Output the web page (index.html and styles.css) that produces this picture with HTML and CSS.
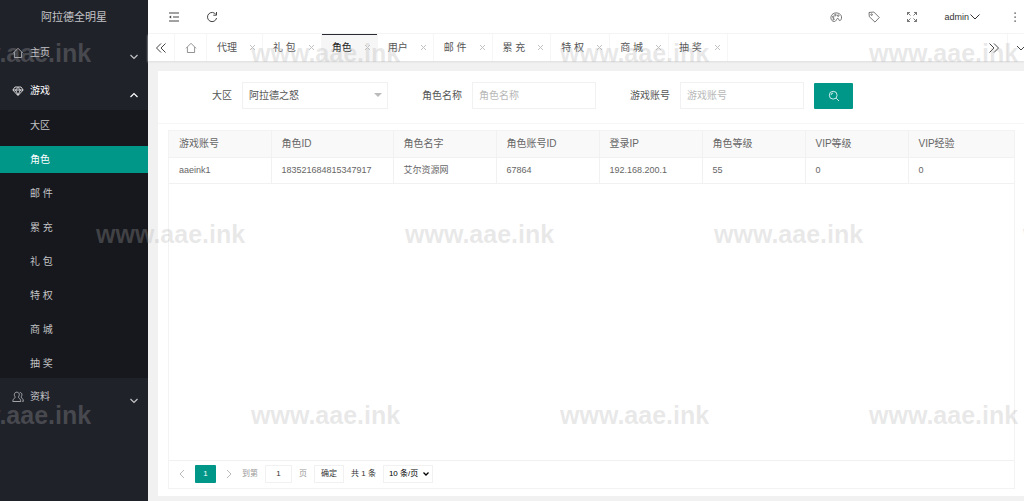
FILE: index.html
```html
<!DOCTYPE html>
<html lang="zh-CN">
<head>
<meta charset="utf-8">
<title>阿拉德全明星</title>
<link rel="stylesheet" href="styles.css">
</head>
<body>
<div class="app">
  <aside class="sidebar">
    <h1 class="brand">阿拉德全明星</h1>
    <nav class="menu">
      <a class="menu-item" href="#">
        <svg class="icon" viewBox="0 0 12 12"><path d="M1 6.3 6 1.3l5 5M2.4 5.2v5.3h7.2V5.2"/></svg>
        <span>主页</span>
        <svg class="arrow" viewBox="0 0 10 6"><path d="M1.5 1 5 4.5 8.5 1"/></svg>
      </a>
      <a class="menu-item open" href="#">
        <svg class="icon" viewBox="0 0 12 12"><path d="M3 2h6l2.2 3L6 10.6.8 5zM1 5h10M3.6 5 6 10l2.4-5M3.6 5 6 2.4 8.4 5"/></svg>
        <span>游戏</span>
        <svg class="arrow" viewBox="0 0 10 6"><path d="M1.5 5 5 1.5 8.5 5"/></svg>
      </a>
      <div class="submenu">
        <a class="sub-item" href="#">大区</a>
        <a class="sub-item active" href="#">角色</a>
        <a class="sub-item" href="#">邮 件</a>
        <a class="sub-item" href="#">累 充</a>
        <a class="sub-item" href="#">礼 包</a>
        <a class="sub-item" href="#">特 权</a>
        <a class="sub-item" href="#">商 城</a>
        <a class="sub-item" href="#">抽 奖</a>
      </div>
      <a class="menu-item" href="#">
        <svg class="icon" viewBox="0 0 12 12"><path d="M4.8 1.2c2.6 0 3.2 3 1.5 4.8C6 7 8.600 7 8.800 10.500H.8C1 7 3.600 7 3.300 6 1.600 4.200 2.200 1.200 4.800 1.200M7.800 1.400c2.400.2 2.700 3 1.200 4.600 0 1 2.300 1 2.400 4.300h-1.200"/></svg>
        <span>资料</span>
        <svg class="arrow" viewBox="0 0 10 6"><path d="M1.500 1 5 4.500 8.500 1"/></svg>
      </a>
    </nav>
  </aside>

  <main class="main">
    <header class="topbar">
      <button class="tool" aria-label="菜单"><svg class="icon dark" viewBox="0 0 12 12"><path d="M1 2h10M5 6h6M1 10h10"/><path class="solid" d="M1 6l2.200-1.500v3z"/></svg></button>
      <button class="tool" aria-label="刷新"><svg class="icon dark" viewBox="0 0 12 12"><path d="M10 3.600A4.600 4.600 0 1 0 10.600 7M10.500 1v3.200H7.300"/></svg></button>
      <span class="space"></span>
      <button class="tool" aria-label="主题"><svg class="icon" viewBox="0 0 12 12"><path d="M3 10.300C.2 9 .2 4.600 3 2.800c3-2 8-.6 8.500 3 .2 2-.5 3.700-1.700 3.800-1.400 0-.6-2-1.900-2.200-1.300 0-1 1-1.800 2-.8 1.100-2 1.400-3.100.9z"/><circle cx="3.200" cy="5.800" r=".8"/><circle cx="5.400" cy="4" r=".8"/><circle cx="8.200" cy="4.600" r=".8"/><circle cx="3.600" cy="8.200" r=".7"/></svg></button>
      <button class="tool" aria-label="便签"><svg class="icon" viewBox="0 0 12 12"><path d="M1 1.500 5.800 1l5.500 5.500-4.300 4.600L1.300 5.700z"/><circle cx="3.600" cy="3.600" r=".8"/></svg></button>
      <button class="tool" aria-label="全屏"><svg class="icon" viewBox="0 0 12 12"><path d="M1.500 4V1.500H4M1.500 1.500l3 3M8 1.500h2.500V4M10.500 1.500l-3 3M1.500 8v2.500H4M1.500 10.500l3-3M8 10.500h2.500V8M10.500 10.500l-3-3"/></svg></button>
      <button class="user">admin<svg class="user-arrow" viewBox="0 0 12 8"><path d="M1.500 1.500 6 6l4.500-4.500"/></svg></button>
      <button class="more" aria-label="更多"><svg class="icon" viewBox="0 0 12 12"><path class="solid" d="M5.500 1.500h1.200v1.200H5.500zM5.500 5.500h1.200v1.200H5.500zM5.500 9.500h1.200v1.200H5.500z"/></svg></button>
    </header>

    <nav class="tabs">
      <button class="tab-btn" aria-label="向左"><svg class="icon dark" viewBox="0 0 12 12"><path d="M6 1.500 1.500 6 6 10.500M10.500 1.500 6 6l4.500 4.500"/></svg></button>
      <button class="tab-btn home" aria-label="主页"><svg class="icon" viewBox="0 0 12 12"><path d="M1 6.300 6 1.300l5 5M2.400 5.200v5.300h7.200V5.200"/></svg></button>
      <a class="tab" href="#">代理<svg class="close" viewBox="0 0 7 7"><path d="M1 1l5 5M6 1 1 6"/></svg></a>
      <a class="tab" href="#">礼 包<svg class="close" viewBox="0 0 7 7"><path d="M1 1l5 5M6 1 1 6"/></svg></a>
      <a class="tab current" href="#">角色<svg class="close" viewBox="0 0 7 7"><path d="M1 1l5 5M6 1 1 6"/></svg></a>
      <a class="tab" href="#">用户<svg class="close" viewBox="0 0 7 7"><path d="M1 1l5 5M6 1 1 6"/></svg></a>
      <a class="tab" href="#">邮 件<svg class="close" viewBox="0 0 7 7"><path d="M1 1l5 5M6 1 1 6"/></svg></a>
      <a class="tab" href="#">累 充<svg class="close" viewBox="0 0 7 7"><path d="M1 1l5 5M6 1 1 6"/></svg></a>
      <a class="tab" href="#">特 权<svg class="close" viewBox="0 0 7 7"><path d="M1 1l5 5M6 1 1 6"/></svg></a>
      <a class="tab" href="#">商 城<svg class="close" viewBox="0 0 7 7"><path d="M1 1l5 5M6 1 1 6"/></svg></a>
      <a class="tab" href="#">抽 奖<svg class="close" viewBox="0 0 7 7"><path d="M1 1l5 5M6 1 1 6"/></svg></a>
      <span class="space"></span>
      <button class="tab-btn" aria-label="向右"><svg class="icon dark" viewBox="0 0 12 12"><path d="M1.500 1.500 6 6l-4.500 4.500M6 1.500 10.500 6 6 10.500"/></svg></button>
      <button class="tab-btn last" aria-label="标签操作"><svg class="icon dark" viewBox="0 0 12 12"><path d="M2 4l4 4 4-4"/></svg></button>
    </nav>

    <section class="card">
      <form class="filters">
        <label class="label" for="zone">大区</label>
        <span class="select-wrap zone">
          <select class="field" id="zone"><option>阿拉德之怒</option></select>
          <svg class="caret" viewBox="0 0 8 4"><path d="M0 0h8L4 4z"/></svg>
        </span>
        <label class="label" for="role">角色名称</label>
        <input class="field text" id="role" type="text" placeholder="角色名称">
        <label class="label" for="account">游戏账号</label>
        <input class="field text" id="account" type="text" placeholder="游戏账号">
        <button class="search" type="button" aria-label="搜索"><svg class="icon" viewBox="0 0 12 12"><circle cx="5.200" cy="5.200" r="3.900"/><path d="M8.200 8.200l2.800 2.800M3 5.200A2.200 2.200 0 0 1 5.200 3"/></svg></button>
      </form>

      <div class="grid">
        <div class="grid-body">
          <table class="data">
            <colgroup><col class="col-first"><col class="col-wide"><col class="col"><col class="col"><col class="col"><col class="col"><col class="col"><col></colgroup>
            <thead><tr><th>游戏账号</th><th>角色ID</th><th>角色名字</th><th>角色账号ID</th><th>登录IP</th><th>角色等级</th><th>VIP等级</th><th>VIP经验</th></tr></thead>
            <tbody><tr><td>aaeink1</td><td>183521684815347917</td><td>艾尔资源网</td><td>67864</td><td>192.168.200.1</td><td>55</td><td>0</td><td>0</td></tr></tbody>
          </table>
        </div>
        <div class="pager">
          <button class="step" aria-label="上一页"><svg viewBox="0 0 6 10"><path d="M5 1 1 5l4 4"/></svg></button>
          <button class="page">1</button>
          <button class="step" aria-label="下一页"><svg viewBox="0 0 6 10"><path d="M1 1l4 4-4 4"/></svg></button>
          <label class="muted" for="goto">到第</label>
          <input class="goto" id="goto" type="text" value="1">
          <span class="muted">页</span>
          <button class="confirm">确定</button>
          <span class="total">共 1 条</span>
          <span class="select-wrap">
            <select class="size" aria-label="每页条数"><option>10 条/页</option></select>
            <svg class="size-arrow" viewBox="0 0 6 4"><path d="M.5.500 3 3 5.500.500"/></svg>
          </span>
        </div>
      </div>
    </section>
  </main>

  <div class="watermark" aria-hidden="true">
    <div class="mark-row"><span>www.aae.ink</span><span>www.aae.ink</span><span>www.aae.ink</span><span>www.aae.ink</span></div>
    <div class="mark-row shifted"><span>www.aae.ink</span><span>www.aae.ink</span><span>www.aae.ink</span><span>www.aae.ink</span></div>
    <div class="mark-row"><span>www.aae.ink</span><span>www.aae.ink</span><span>www.aae.ink</span><span>www.aae.ink</span></div>
  </div>
</div>
</body>
</html>
```

FILE: styles.css
```css
* { box-sizing: border-box; }

body {
  margin: 0;
  background: #f1f1f1;
  color: #555;
  font: 10px/14px "Liberation Sans", "Noto Sans CJK SC", sans-serif;
}

a { color: inherit; text-decoration: none; }

button, input, select {
  margin: 0;
  padding: 0;
  border: 0;
  border-radius: 0;
  background: none;
  color: inherit;
  font: inherit;
  appearance: none;
}

svg { display: block; fill: none; stroke: currentColor; }

.app {
  position: relative;
  display: flex;
  min-height: 100vh;
  overflow: hidden;
}

.icon { width: 12px; height: 12px; flex: none; stroke-width: 0.8; }
.icon.dark { color: #444; stroke-width: 1; }
.solid { fill: currentColor; stroke: none; }
.space { flex: 1; }

/* Sidebar */
.sidebar {
  flex: none;
  width: 148px;
  background: #20222a;
  color: #c3c4c6;
}

.brand {
  margin: 0;
  font-size: 11px;
  font-weight: 400;
  line-height: 34px;
  text-align: center;
}

.menu-item {
  display: flex;
  align-items: center;
  gap: 6px;
  height: 38px;
  padding: 0 9px 0 12px;
}

.menu-item.open { color: #fff; }

.arrow {
  width: 10px;
  height: 6px;
  margin: 8px 0 0 auto;
  stroke-width: 1.2;
}

.submenu {
  display: flex;
  flex-direction: column;
  gap: 7px;
  padding: 2px 0 1px;
  background: #17181d;
}

.sub-item { padding-left: 30px; line-height: 27px; }
.sub-item.active { background: #009688; color: #fff; }

/* Top bars */
.main {
  display: flex;
  flex: 1;
  flex-direction: column;
  min-width: 0;
}

.topbar {
  display: flex;
  height: 34px;
  padding-left: 7px;
  background: #fff;
  border-bottom: 1px solid #f6f6f6;
}

.tool {
  display: flex;
  align-items: center;
  justify-content: center;
  width: 38px;
}

.user {
  display: flex;
  align-items: center;
  padding: 0 25px 0 13px;
  color: #333;
  font-size: 9px;
}

.user-arrow { width: 12px; height: 8px; }

.more {
  display: flex;
  align-items: center;
  padding: 0 3px;
  color: #222;
}

.tabs {
  display: flex;
  height: 27px;
  background: #fff;
  box-shadow: 0 1px 2px #ddd;
}

.tab-btn {
  display: flex;
  flex: none;
  align-items: center;
  justify-content: center;
  width: 27px;
  border-right: 1px solid #f6f6f6;
}

.tab-btn.home { width: 32px; color: #777; }
.tab-btn.last { margin-right: -11px; }

.tab {
  display: flex;
  flex: none;
  align-items: center;
  gap: 12px;
  padding: 0 6px 0 10px;
  border-right: 1px solid #f6f6f6;
}

.tab.current {
  background: #f6f6f6;
  box-shadow: inset 0 1px #292b34;
  color: #222;
}

.close { width: 7px; height: 7px; color: #c2c2c2; }

/* Card */
.card {
  display: flex;
  flex: 1;
  flex-direction: column;
  margin: 10px 0 5px 10px;
  background: #fff;
}

.filters {
  display: flex;
  align-items: center;
  gap: 10px;
  padding: 11px 10px 14px;
  border-bottom: 1px solid #f6f6f6;
}

.label { width: 64px; text-align: right; }

.select-wrap { position: relative; display: flex; }
.zone { width: 146px; }

.field {
  width: 100%;
  height: 27px;
  padding: 0 6px;
  border: 1px solid #f1f1f1;
}

.field.text { width: 124px; }
.field::placeholder { color: #b8b8b8; }

.caret {
  position: absolute;
  top: 11px;
  right: 6px;
  width: 8px;
  height: 4px;
  fill: #bbb;
  stroke: none;
}

.search {
  display: flex;
  align-items: center;
  justify-content: center;
  width: 39px;
  height: 26px;
  border-radius: 1px;
  background: #009688;
  color: #fff;
}

.grid {
  display: flex;
  flex: 1;
  flex-direction: column;
  margin: 6px 9px 7px 10px;
  border: 1px solid #f3f3f3;
}

.grid-body { flex: 1; }

.data {
  width: 100%;
  border-collapse: collapse;
  table-layout: fixed;
  color: #666;
}

.col { width: 103px; }
.col-first { width: 102px; }
.col-wide { width: 122px; }

.data th, .data td {
  height: 26px;
  padding: 0 10px;
  border-right: 1px solid #f1f1f1;
  border-bottom: 1px solid #f1f1f1;
  font-weight: 400;
  text-align: left;
}

.data th { background: #f9f9f9; }
.data td { font-size: 9px; }
.data th:last-child, .data td:last-child { border-right: 0; }

/* Pagination */
.pager {
  display: flex;
  align-items: center;
  gap: 7px;
  height: 28px;
  padding: 0 0 2px 7px;
  border-top: 1px solid #f1f1f1;
  color: #333;
  font-size: 8px;
}

.step {
  display: flex;
  justify-content: center;
  width: 12px;
  color: #bbb;
}

.step svg { width: 6px; height: 10px; }

.page {
  width: 21px;
  height: 18px;
  border-radius: 1px;
  background: #009688;
  color: #fff;
}

.muted { color: #999; }

.goto {
  width: 27px;
  height: 18px;
  border: 1px solid #f1f1f1;
  text-align: center;
}

.confirm {
  width: 30px;
  height: 18px;
  border: 1px solid #f1f1f1;
}

.size {
  width: 50px;
  height: 18px;
  padding-left: 5px;
  border: 1px solid #f1f1f1;
  color: #000;
}

.size-arrow {
  position: absolute;
  top: 7px;
  right: 4px;
  width: 6px;
  height: 4px;
  color: #000;
  stroke-width: 1.3;
}

/* Repeating site mark laid over the whole page */
.watermark {
  position: absolute;
  inset: 0;
  z-index: 5;
  display: flex;
  flex-direction: column;
  gap: 153px;
  padding-top: 39px;
  overflow: hidden;
  color: rgba(174, 174, 174, 0.28);
  font-size: 25px;
  font-weight: 700;
  line-height: 28px;
  pointer-events: none;
}

.mark-row { display: flex; margin-left: -58px; }
.mark-row.shifted { margin-left: 96px; }
.mark-row span { flex: none; width: 309px; }
```
